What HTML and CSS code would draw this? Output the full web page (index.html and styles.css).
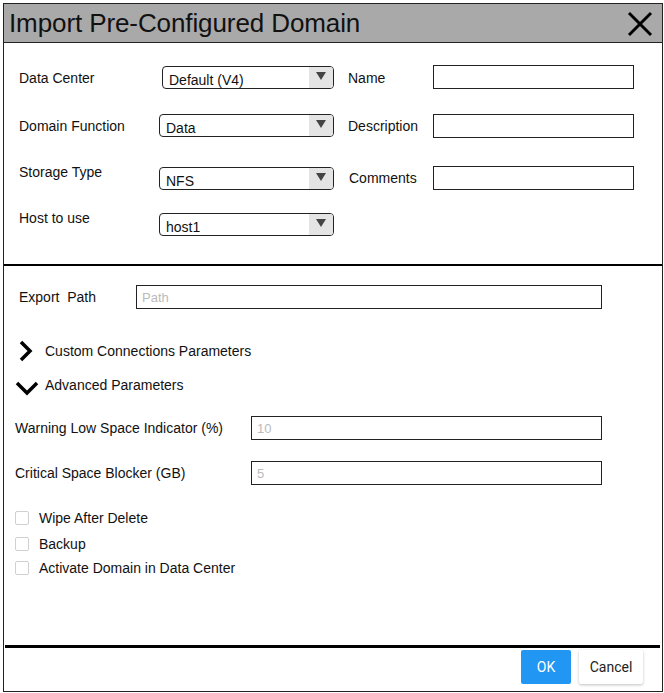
FILE: index.html
```html
<!DOCTYPE html>
<html>
<head>
<meta charset="utf-8">
<link rel="stylesheet" href="styles.css">
</head>
<body>
<div class="dialog">
  <div class="titlebar">
    <span class="title">Import Pre-Configured Domain</span>
    <svg class="close" width="26" height="26" viewBox="0 0 26 26"><path d="M2 2 L24 24 M24 2 L2 24" stroke="#000" stroke-width="3" fill="none"/></svg>
  </div>
  <div class="top">
    <div class="lbl l1">Data Center</div>
    <div class="select s1"><span>Default (V4)</span><i class="arrow"><svg width="10" height="8" viewBox="0 0 10 8"><path d="M0 0 H10 L5 8 Z" fill="#444"/></svg></i></div>
    <div class="lbl r1">Name</div>
    <div class="input i1"></div>

    <div class="lbl l2">Domain Function</div>
    <div class="select s2"><span>Data</span><i class="arrow"><svg width="10" height="8" viewBox="0 0 10 8"><path d="M0 0 H10 L5 8 Z" fill="#444"/></svg></i></div>
    <div class="lbl r2">Description</div>
    <div class="input i2"></div>

    <div class="lbl l3">Storage Type</div>
    <div class="select s3"><span>NFS</span><i class="arrow"><svg width="10" height="8" viewBox="0 0 10 8"><path d="M0 0 H10 L5 8 Z" fill="#444"/></svg></i></div>
    <div class="lbl r3">Comments</div>
    <div class="input i3"></div>

    <div class="lbl l4">Host to use</div>
    <div class="select s4"><span>host1</span><i class="arrow"><svg width="10" height="8" viewBox="0 0 10 8"><path d="M0 0 H10 L5 8 Z" fill="#444"/></svg></i></div>
  </div>
  <div class="bottom">
    <div class="row export">
      <span class="blabel">Export&nbsp; Path</span>
      <div class="field wide"><span class="ph">Path</span></div>
    </div>
    <div class="toggle custom">
      <svg width="16" height="22" viewBox="0 0 16 22"><path d="M3 2 L12 11 L3 20" stroke="#000" stroke-width="3.5" fill="none"/></svg>
      <span>Custom Connections Parameters</span>
    </div>
    <div class="toggle adv">
      <svg width="24" height="16" viewBox="0 0 24 16"><path d="M2 3 L12 13 L22 3" stroke="#000" stroke-width="3.5" fill="none"/></svg>
      <span>Advanced Parameters</span>
    </div>
    <div class="row warn">
      <span class="plabel">Warning Low Space Indicator (%)</span>
      <div class="field par"><span class="ph">10</span></div>
    </div>
    <div class="row crit">
      <span class="plabel">Critical Space Blocker (GB)</span>
      <div class="field par"><span class="ph">5</span></div>
    </div>
    <div class="checks">
      <label class="check"><i class="box"></i><span>Wipe After Delete</span></label>
      <label class="check c2"><i class="box"></i><span>Backup</span></label>
      <label class="check c3"><i class="box"></i><span>Activate Domain in Data Center</span></label>
    </div>
  </div>
  <div class="footer">
    <button class="btn ok">OK</button>
    <button class="btn cancel">Cancel</button>
  </div>
</div>
</body>
</html>
```

FILE: styles.css
```css
html, body { margin: 0; padding: 0; background: #fff; }
body { font-family: "Liberation Sans", Arial, sans-serif; color: #111; }

.dialog {
  box-sizing: border-box;
  margin: 3px 0 0 3px;
  width: 660px;
  height: 689px;
  border: 1px solid #222;
  display: flex;
  flex-direction: column;
}

.titlebar {
  height: 38px;
  flex: none;
  background: #a9a9a9;
  border-bottom: 1px solid #222;
  display: flex;
  align-items: center;
  justify-content: space-between;
  padding: 0 9px 0 5px;
}
.title { font-size: 26px; color: #111; margin-top: 1px; letter-spacing: -0.1px; }
.close { display: block; margin-top: 1px; }

.top {
  flex: none;
  border-bottom: 2px solid #000;
  display: grid;
  grid-template-columns: 140px 175px 99px 201px;
  grid-template-rows: 48px 51px 48px 30px;
  padding: 23px 0 0 15px;
  box-sizing: border-box;
  height: 223px;
  font-size: 14px;
}
.lbl { align-self: start; font-size: 14px; line-height: 16px; }
.l1 { margin-top: 4px; }
.l2 { margin-top: 4px; }
.r1, .r2 { margin-top: 4px; margin-left: 14px; }
.l3 { margin-top: -1px; }
.r3 { margin-top: 5px; margin-left: 15px; }
.l4 { margin-top: -3px; }

.select {
  box-sizing: border-box;
  height: 23px;
  width: 175px;
  border: 1px solid #222;
  border-radius: 4px;
  display: flex;
  align-items: stretch;
  overflow: hidden;
  align-self: start;
}
.s1 { margin-left: 3px; width: 172px; margin-top: 0; }
.s3 { margin-top: 2px; }
.select span { flex: 1; padding: 5px 0 0 6px; font-size: 14px; line-height: 16px; }
.arrow {
  width: 24px;
  background: #e4e4e4;
  display: flex;
  align-items: center;
  justify-content: center;
}
.arrow svg { display: block; margin-top: -3px; }

.input {
  box-sizing: border-box;
  height: 24px;
  width: 201px;
  border: 1px solid #222;
  align-self: start;
}
.i1 { margin-top: -1px; }
.i2 { margin-top: 0; }
.i3 { margin-top: 1px; }

.bottom {
  flex: 1;
  font-size: 14px;
  display: flex;
  flex-direction: column;
  padding: 19px 0 0 0;
}
.row { display: flex; align-items: center; }
.export { padding-left: 15px; }
.blabel { width: 117px; }
.field {
  box-sizing: border-box;
  height: 24px;
  border: 1px solid #222;
  display: flex;
  align-items: center;
  padding-left: 5px;
}
.wide { width: 466px; }
.ph { color: #bbb; font-size: 13px; margin-top: 1px; }

.toggle { display: flex; align-items: center; }
.custom { margin-top: 31px; padding-left: 14px; }
.custom svg { margin-right: 11px; }
.custom span { margin-top: 0; }
.adv { margin-top: 14px; padding-left: 11px; }
.adv svg { margin-right: 6px; margin-top: 4px; }
.adv span { margin-top: -3px; }

.warn { margin-top: 20px; padding-left: 11px; }
.crit { margin-top: 21px; padding-left: 11px; }
.plabel { width: 236px; }
.par { width: 351px; }

.checks { display: flex; flex-direction: column; padding-left: 11px; margin-top: 25px; }
.check { display: flex; align-items: center; height: 16px; }
.c2 { margin-top: 10px; }
.c3 { margin-top: 8px; }
.box {
  box-sizing: border-box;
  width: 14px; height: 14px;
  border: 1px solid #d0d0d0;
  border-radius: 2px;
  margin-right: 10px;
}

.footer {
  flex: none;
  box-sizing: border-box;
  height: 46px;
  border-top: 3px solid #000;
  margin: 0 2px 0 1px;
  display: flex;
  justify-content: flex-end;
  align-items: flex-start;
  padding: 2px 17px 0 0;
  gap: 8px;
}
.btn {
  font-family: Roboto, "Liberation Sans", sans-serif;
  font-size: 14px;
  height: 34px;
  border: none;
  border-radius: 2px;
  cursor: pointer;
}
.ok { background: #2196f3; color: #fff; width: 50px; }
.cancel { background: #fff; color: #222; width: 64px; box-shadow: 0 1px 3px rgba(0,0,0,0.25); }
```
